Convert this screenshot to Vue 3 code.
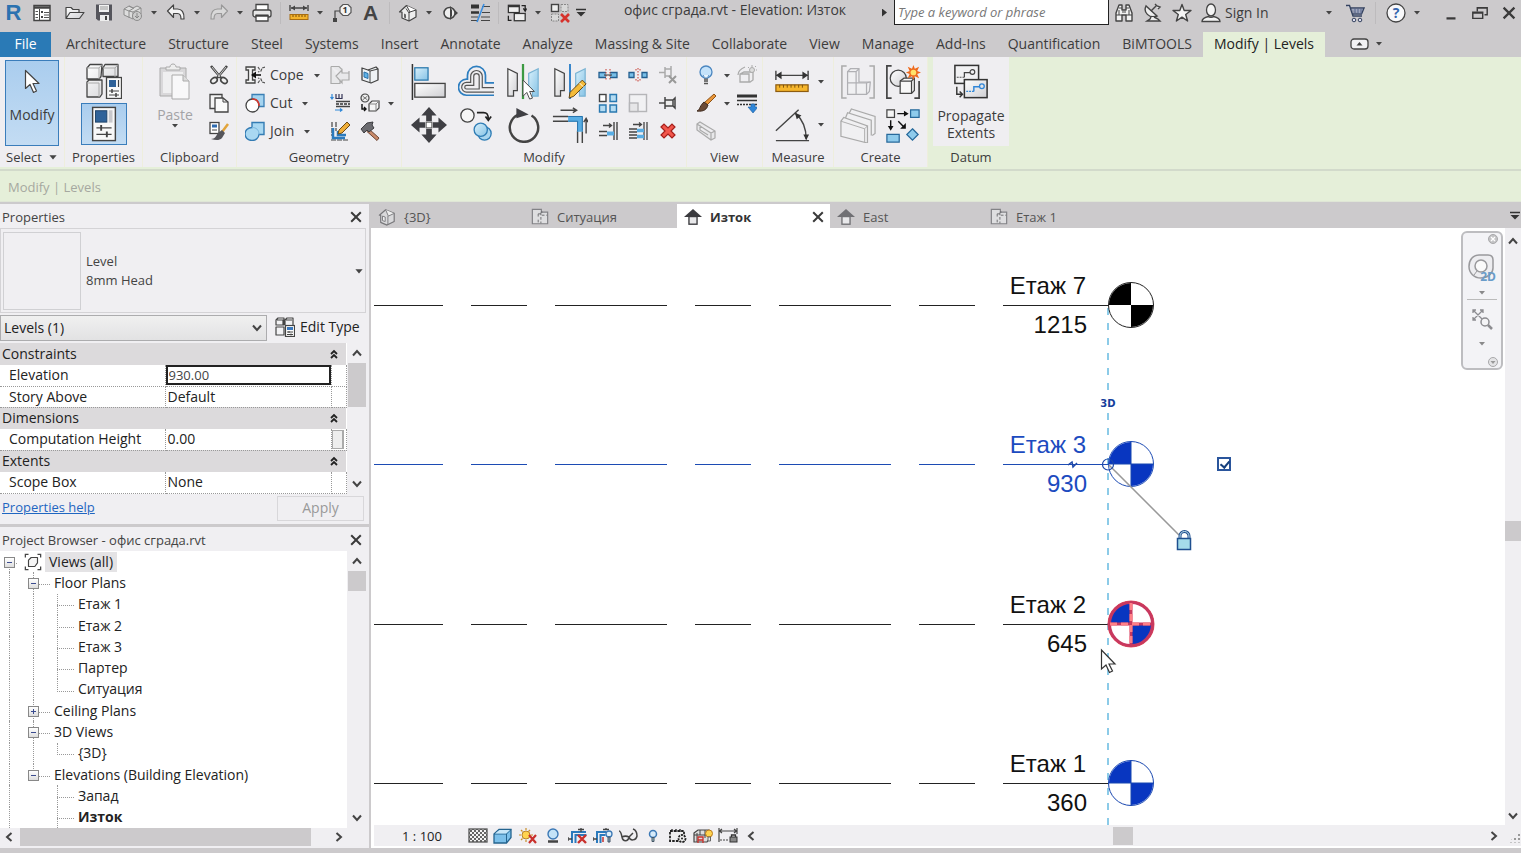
<script setup>
import { ref } from 'vue'

const quickTools = [
  { icon: 'palette', label: 'Home', wide: true },
  { icon: 'open', label: 'Open' },
  { icon: 'save', label: 'Save' },
  { icon: 'sync', label: 'Synchronize', caret: true },
  { icon: 'undo', label: 'Undo', caret: true },
  { icon: 'redo', label: 'Redo', caret: true },
  { icon: 'print', label: 'Print', sep: true },
  { icon: 'dim-small', label: 'Measure', caret: true },
  { icon: 'tag', label: 'Tag by category', badge: '1' },
  { text: 'A', label: 'Text', sep: true },
  { icon: 'house', label: 'Default 3D view', caret: true },
  { icon: 'section', label: 'Section' },
  { icon: 'thin', label: 'Thin lines', sep: true },
  { icon: 'switch', label: 'Switch windows', caret: true },
  { icon: 'close-win', label: 'Close inactive views' },
]

const infoTools = [
  { icon: 'binoculars', label: 'Search' },
  { icon: 'dish', label: 'Communication center' },
  { icon: 'star', label: 'Favorites' },
]

const windowTools = [
  { icon: 'min', label: 'Minimize' },
  { icon: 'restore', label: 'Restore' },
  { icon: 'close', label: 'Close' },
]

const ribbonTabs = [
  'Architecture', 'Structure', 'Steel', 'Systems', 'Insert', 'Annotate', 'Analyze',
  'Massing & Site', 'Collaborate', 'View', 'Manage', 'Add-Ins', 'Quantification', 'BiMTOOLS',
]

const clipboardTools = ['cutclip', 'copyclip', 'matchtype']
const geometryTools = [
  { icon: 'cope', label: 'Cope' },
  { icon: 'cutgeo', label: 'Cut' },
  { icon: 'join', label: 'Join' },
]
const geometrySmall = ['coping', 'face', 'wallopen', 'paintgeo', 'beam', 'hammer']
const modifyBig = ['align', 'offset', 'mirrorpick', 'mirrordraw', 'move', 'copy', 'rotate', 'trim']
const modifySmall = ['split', 'splitgap', 'unpin', 'array', 'scale', 'pin', 'trimone', 'trimmulti', 'delete']
const createBig = ['group', 'creategroup', 'assembly', 'similar']

const viewTabs = [
  { icon: 'v3d', name: '{3D}' },
  { icon: 'vplan', name: 'Ситуация' },
  { icon: 'velev', name: 'Изток', active: true },
  { icon: 'velev', name: 'East' },
  { icon: 'vplan', name: 'Етаж 1' },
]

// Guides per row: l = line, n = blank, t = tee, e = corner, m = minus box, p = plus box
const tree = [
  { guides: 'm', name: 'Views (all)', root: true },
  { guides: 'lm', name: 'Floor Plans' },
  { guides: 'llt', name: 'Етаж 1' },
  { guides: 'llt', name: 'Етаж 2' },
  { guides: 'llt', name: 'Етаж 3' },
  { guides: 'llt', name: 'Партер' },
  { guides: 'lle', name: 'Ситуация' },
  { guides: 'lp', name: 'Ceiling Plans' },
  { guides: 'lm', name: '3D Views' },
  { guides: 'lle', name: '{3D}' },
  { guides: 'lm', name: 'Elevations (Building Elevation)', last: true },
  { guides: 'lnt', name: 'Запад' },
  { guides: 'lnt', name: 'Изток', bold: true },
]

const levels = [
  { name: 'Етаж 7', value: '1215', y: 77, tone: 'black' },
  { name: 'Етаж 3', value: '930', y: 236, tone: 'selected' },
  { name: 'Етаж 2', value: '645', y: 396, tone: 'hover' },
  { name: 'Етаж 1', value: '360', y: 555, tone: 'blue' },
]

const viewControls = ['detail', 'style', 'sun', 'shadow', 'crop', 'cropshow', 'glasses', 'bulb-mini', 'template', 'analytical', 'constraints']

const elevation = ref('930.00')
const filter = ref('Levels (1)')
const bubble = ref(true)
const keyword = ref('')
</script>

<template>
  <div class="app">
    <svg class="defs" aria-hidden="true">
      <defs>
        <linearGradient id="gGrey" x1="0" y1="0" x2="1" y2="1"><stop offset="0" stop-color="#fff" /><stop offset="1" stop-color="#cfcfd3" /></linearGradient>
        <linearGradient id="gBlue" x1="0" y1="0" x2="1" y2="1"><stop offset="0" stop-color="#d9f0fb" /><stop offset="1" stop-color="#86c3e6" /></linearGradient>
        <pattern id="pDots" width="4" height="4" patternUnits="userSpaceOnUse"><rect width="4" height="4" fill="#f4f4f4" /><path d="M0 0h2v2h2v2h-2v-2h-2z" fill="#666" /></pattern>
      </defs>

      <symbol id="caret" viewBox="0 0 8 5"><path d="M1 1h6L4 4.500z" fill="#444" /></symbol>
      <symbol id="chev-down" viewBox="0 0 12 12"><path d="M2 3.500l4 4.500 4-4.500" fill="none" stroke="#444" stroke-width="2" /></symbol>
      <symbol id="chev-up" viewBox="0 0 12 12"><path d="M2 8.500l4-4.500 4 4.500" fill="none" stroke="#444" stroke-width="2" /></symbol>
      <symbol id="chev-left" viewBox="0 0 12 12"><path d="M8.500 2L4 6l4.500 4" fill="none" stroke="#444" stroke-width="2" /></symbol>
      <symbol id="chev-right" viewBox="0 0 12 12"><path d="M3.500 2L8 6l-4.500 4" fill="none" stroke="#444" stroke-width="2" /></symbol>
      <symbol id="chev-double" viewBox="0 0 10 12"><path d="M2 6l3-3 3 3M2 10l3-3 3 3" fill="none" stroke="#222" stroke-width="1.800" /></symbol>
      <symbol id="close" viewBox="0 0 20 20"><path d="M4 4l12 12M16 4L4 16" stroke="#3a3a3a" stroke-width="2.500" /></symbol>
      <symbol id="min" viewBox="0 0 20 20"><path d="M5 16h10" stroke="#3a3a3a" stroke-width="2.500" /></symbol>
      <symbol id="restore" viewBox="0 0 20 20"><path d="M7 8V4h11v8h-3M2 9h11v7H2z M2 10h11M7 4.500h11" fill="none" stroke="#3a3a3a" stroke-width="1.600" /></symbol>
      <symbol id="menu-down" viewBox="0 0 12 10"><path d="M1 1.500h10" stroke="#333" stroke-width="1.500" /><path d="M1.500 4h9L6 8.500z" fill="#333" /></symbol>

      <symbol id="palette" viewBox="0 0 20 20"><rect x="2" y="2.500" width="16" height="15" fill="#fff" stroke="#444" stroke-width="1.500" /><path d="M2 4.500h16" stroke="#444" stroke-width="2.500" /><path d="M7.500 6v11" stroke="#444" /><path d="M3.500 8.500h2.500M3.500 11.500h2.500M3.500 14.500h2.500M12 14.500h5M12 9.500h5M12 12h5" stroke="#555" stroke-width="1.200" /><rect x="9" y="8" width="2" height="2" fill="#444" /><rect x="9" y="13" width="2" height="2" fill="#444" /></symbol>
      <symbol id="open" viewBox="0 0 20 20"><path d="M1 15.500V4.500h5l2 2h6v3M1 15.500L5 9.500h14l-4.500 6z" fill="url(#gGrey)" stroke="#444" stroke-width="1.200" stroke-linejoin="round" /></symbol>
      <symbol id="save" viewBox="0 0 20 20"><path d="M2 1.500h16v16H4l-2-2z" fill="#55555c" /><rect x="5" y="2" width="10" height="7" fill="#f2f2f2" /><path d="M6 4h8M6 6h8" stroke="#999" /><rect x="6" y="12" width="9" height="6" fill="#eee" /><rect x="11" y="13" width="2" height="4" fill="#444" /></symbol>
      <symbol id="sync" viewBox="0 0 20 20"><path d="M1 6l5-3 4 2 4-2 4 2v6l-8 5-9-4z M1 6l5 2v7M6 8l5-3M10 16V9l8-4M10 9L6 8M6 3l4 2" fill="#ddd" stroke="#8c8c8c" /><circle cx="14" cy="13" r="4.500" fill="#ccc" stroke="#8c8c8c" /><path d="M14 10v5M12 13l2 2 2-2" fill="none" stroke="#888" /></symbol>
      <symbol id="undo" viewBox="0 0 20 20"><path d="M1.500 8l6-6v4h4c4 0 7 3 6.500 10h-3c0-4-1-5.500-3.500-5.500h-4v4z" fill="#f4f4f4" stroke="#444" stroke-width="1.200" stroke-linejoin="round" /></symbol>
      <symbol id="redo" viewBox="0 0 20 20"><path d="M18.500 8l-6-6v4h-4C4.500 6 1.500 9 2 16h3c0-4 1-5.500 3.500-5.500h4v4z" fill="#d9d9d9" stroke="#999" stroke-width="1.200" stroke-linejoin="round" /></symbol>
      <symbol id="print" viewBox="0 0 20 20"><path d="M4 7V1.500h12V7" fill="#fff" stroke="#444" stroke-width="1.300" /><rect x="1" y="7" width="18" height="7" rx="2" fill="#e8e8e8" stroke="#444" stroke-width="1.300" /><path d="M3.500 12.500h13" stroke="#333" stroke-width="2" /><path d="M4 13h12v5H4z" fill="#fff" stroke="#444" stroke-width="1.300" /></symbol>
      <symbol id="dim-small" viewBox="0 0 20 20"><path d="M2 5h16M1 2v6M19 2v6" fill="none" stroke="#444" stroke-width="1.400" /><path d="M2 5l4-2.500v5zM18 5l-4-2.500v5z" fill="#444" /><rect x="1" y="11.500" width="18" height="5" fill="#f3b32c" stroke="#a86d11" /><path d="M4 12v2M7 12v2M10 12v2M13 12v2M16 12v2" stroke="#7a4f0b" /></symbol>
      <symbol id="tag" viewBox="0 0 20 20"><path d="M8 4.500l3-3h5l3 3v5l-3 3h-5l-3-3z" fill="#f4f4f4" stroke="#555" stroke-width="1.200" /><path d="M8 8H3v8" fill="none" stroke="#444" stroke-width="1.200" /><path d="M1 15h4v4H1z" fill="#444" /></symbol>
      <symbol id="house" viewBox="0 0 20 20"><path d="M1.500 9l7-6.500L18 7v7l-7 4-7-3V9z" fill="#eee" stroke="#444" stroke-width="1.200" stroke-linejoin="round" /><path d="M8.500 2.500L12 9l6-2M11 10v8M12 9l-1 1L8 5.500" fill="#fff" stroke="#444" /><path d="M6 10.500l2 1v4l-2-1z" fill="#666" /></symbol>
      <symbol id="section" viewBox="0 0 20 20"><path d="M9 3l8 7-8 7z" fill="#444" /><circle cx="8.500" cy="10" r="5.500" fill="#eee" stroke="#444" stroke-width="1.500" /><path d="M9 4v12l2-3V7z" fill="#444" /></symbol>
      <symbol id="thin" viewBox="0 0 20 20"><path d="M1 3.500h8" stroke="#333" stroke-width="4" /><path d="M1 9.500h8" stroke="#333" stroke-width="2.500" /><path d="M1 14h7M1 17.500h7M12 3.500h8M12 9.500h8M11 14h9M11 17.500h9" stroke="#444" stroke-width="1.200" /><path d="M14 1L7 19" stroke="#3b8ee0" stroke-width="1.600" /></symbol>
      <symbol id="switch" viewBox="0 0 22 20"><rect x="1.500" y="1.500" width="12" height="8" fill="#eee" stroke="#333" stroke-width="1.400" /><path d="M1.500 2.500h12M8 11.500h12" stroke="#333" stroke-width="2.200" /><rect x="8" y="10.500" width="12" height="8" fill="#eee" stroke="#333" stroke-width="1.400" /><path d="M16 2h4v5M18 5l2 3 1.500-3M5 18H1.500v-5" fill="none" stroke="#222" stroke-width="1.400" /></symbol>
      <symbol id="close-win" viewBox="0 0 20 20"><rect x="1.500" y="1.500" width="7" height="7" fill="#eee" stroke="#444" stroke-width="1.400" /><path d="M11 1.500h7v7h-7zM1.500 11h7v7h-7z" fill="#d8d8d8" stroke="#888" stroke-dasharray="2 1" /><path d="M11 11l8 8M19 11l-8 8" stroke="#d6322c" stroke-width="2.600" /></symbol>
      <symbol id="binoculars" viewBox="0 0 20 20"><path d="M5 2h3v5h4V2h3l3 8v8h-6v-6H8v6H2v-8z" fill="#f2f2f2" stroke="#444" stroke-width="1.400" stroke-linejoin="round" /><path d="M2 12h6M12 12h6M5 5h3M12 5h3M8 9h4M5 12V7M15 12V7" stroke="#444" /></symbol>
      <symbol id="dish" viewBox="0 0 20 20"><path d="M3 3c-3 6 3 13 11 10z" fill="#eee" stroke="#444" stroke-width="1.400" /><path d="M8 8l5-5M12 1l2 2 3 1-2 2M8 14l-1 2-3 2h13l-2-2-4-2" fill="#eee" stroke="#444" stroke-width="1.400" /></symbol>
      <symbol id="star" viewBox="0 0 20 20"><path d="M10 1.500l2.200 6H19l-5.300 4L15.600 18 10 14.200 4.400 18l1.900-6.500L1 7.500h6.800z" fill="#f4f4f4" stroke="#444" stroke-width="1.400" stroke-linejoin="round" /></symbol>
      <symbol id="person" viewBox="0 0 20 20"><ellipse cx="10" cy="7" rx="4.500" ry="6" fill="#f4f4f4" stroke="#444" stroke-width="1.300" /><path d="M1 18.500c0-3 2-4 6.500-5 1 1.200 4 1.200 5 0 4.500 1 6.500 2 6.500 5z" fill="#f4f4f4" stroke="#444" stroke-width="1.300" /></symbol>
      <symbol id="cart" viewBox="0 0 20 20"><path d="M1 2.500h3.500L8 13h9M5.500 5H19l-2.500 6H7.500" fill="#e6e8f2" stroke="#34425f" stroke-width="1.400" /><path d="M6 7h12M7 9h10M10 5v6M13 5v6M16 5v6" fill="none" stroke="#56658a" /><circle cx="9" cy="17" r="1.800" fill="#dde" stroke="#34425f" /><circle cx="15" cy="17" r="1.800" fill="#dde" stroke="#34425f" /></symbol>
      <symbol id="help" viewBox="0 0 20 20"><circle cx="10" cy="10" r="9" fill="#f8f8fa" stroke="#444" stroke-width="1.300" /></symbol>

      <symbol id="cursor" viewBox="0 0 16 26"><path d="M1.500 1.500v18l4.500-4 3.500 8 3-1.500-3.500-7.500h6z" fill="#fff" stroke="#444" stroke-width="1.200" stroke-linejoin="round" /></symbol>
      <symbol id="typeprops" viewBox="0 0 36 36"><path d="M1 5l3-3.500h12l-1 12-2 2.500H1zM17 5l2-3.500h13v12H17zM1 19l2-2h13v14l-2 3H1z" fill="url(#gGrey)" stroke="#444" stroke-width="1.300" stroke-linejoin="round" /><path d="M1 5h12v11M13 5l3-3.500M17 5h12v9M29 5l3-3.500M1 20h12v14" fill="none" stroke="#aaa" /><rect x="20.500" y="14.500" width="15" height="21" fill="#fafafa" stroke="#444" stroke-width="1.300" /><rect x="23" y="17" width="7" height="7" fill="#2f6299" /><path d="M32.500 17v7M23 28h10M23 32h10" stroke="#444" stroke-width="1.200" /><path d="M26 26v4M30 30v4" stroke="#444" stroke-width="1.500" /></symbol>
      <symbol id="edittype" viewBox="0 0 20 20"><path d="M1 3l2-2h6v7H1zM10 8V3l2-2h6v7M1 10h8v8H1zM9 3H2M17 3h-6M8 3v5" fill="#f2f2f4" stroke="#444" stroke-width="1.200" stroke-linejoin="round" /><rect x="10.500" y="8.500" width="9" height="11" fill="#fff" stroke="#444" stroke-width="1.200" /><rect x="12" y="10" width="6" height="3" fill="#3a78bd" /><path d="M12 15h6M12 17.500h6M14 14v2M16 16.500v2" stroke="#444" /></symbol>
      <symbol id="props" viewBox="0 0 28 38"><rect x="2" y="1.500" width="24" height="35" fill="#f8f8f8" stroke="#444" stroke-width="1.500" /><rect x="5" y="5" width="12" height="12" fill="#2f6299" stroke="#1d4268" /><rect x="19" y="4.500" width="4" height="13" fill="#c8c8cc" /><path d="M6 23h16M6 30h16" stroke="#444" stroke-width="1.400" /><path d="M11 20v6M17 27v6" stroke="#444" stroke-width="2" /></symbol>
      <symbol id="paste" viewBox="0 0 32 38"><path d="M1 5h26v28H1z" fill="#d9d8da" stroke="#aaa" /><rect x="4" y="9" width="20" height="21" fill="#efeff0" /><path d="M7 7V4h4c0-4 6-4 6 0h4v3z" fill="#eee" stroke="#aaa" /><path d="M13 12h11l6 6v18H13z" fill="#f8f8f9" stroke="#aaa" /><path d="M24 12v6h6" fill="#ddd" stroke="#aaa" /></symbol>
      <symbol id="cutclip" viewBox="0 0 20 20"><path d="M2 1l10 12M18 1L8 13" stroke="#444" stroke-width="2.600" /><path d="M3 2l8 10M17 2L9 12" stroke="#eee" stroke-width=".8" /><ellipse cx="5" cy="15.500" rx="3.500" ry="2.500" fill="#eee" stroke="#444" stroke-width="1.600" transform="rotate(-35 5 15.500)" /><ellipse cx="15" cy="15.500" rx="3.500" ry="2.500" fill="#eee" stroke="#444" stroke-width="1.600" transform="rotate(35 15 15.500)" /></symbol>
      <symbol id="copyclip" viewBox="0 0 20 20"><path d="M1 1.500h12v14H1z" fill="#f4f4f4" stroke="#444" stroke-width="1.300" /><path d="M6 5h8l5 4v10H6z" fill="#fafafa" stroke="#444" stroke-width="1.300" /><path d="M14 5v4h5" fill="none" stroke="#444" /></symbol>
      <symbol id="matchtype" viewBox="0 0 20 20"><rect x="1" y="1.500" width="9" height="11" fill="#fff" stroke="#444" stroke-width="1.300" /><rect x="3" y="3.500" width="5" height="3" fill="#2f6bb0" /><path d="M3 9h5" stroke="#444" /><path d="M19 3l-6 8" stroke="#e2a43b" stroke-width="2.500" /><path d="M13 9l3 3-3 5c-3 3-7 2-11 1 4 0 5-3 7-6z" fill="#55555a" /></symbol>
      <symbol id="cope" viewBox="0 0 20 20"><path d="M1 2h9v3H7.500v10H10v3H1v-3h2.500V5H1z" fill="#f4f4f4" stroke="#444" stroke-width="1.300" /><path d="M20 2l-3 1-1 3-3 1M20 18l-3-1-1-3-3-1M13 2l2 3M13 18l2-3" fill="none" stroke="#555" stroke-width="1.200" stroke-dasharray="3 1" /><path d="M7 10h9" stroke="#111" stroke-width="1.600" /><path d="M6 10l5-3.500v7z" fill="#111" /></symbol>
      <symbol id="cutgeo" viewBox="0 0 20 20"><path d="M7 1.500h12v12H7z" fill="#a5d4f0" stroke="#3a7fb5" stroke-width="1.300" /><circle cx="7.500" cy="12.500" r="6.500" fill="#fff" stroke="#444" stroke-width="1.300" /><path d="M7 6c5 0 7 3 7 7" fill="none" stroke="#d43a30" stroke-width="1.600" /></symbol>
      <symbol id="join" viewBox="0 0 20 20"><path d="M7 1.500h12v12h-5a7 6.500 0 1 1-7-7z" fill="#a9d8f2" stroke="#347cb4" stroke-width="1.400" /><path d="M7 6.500c4 0 7 2 7 7" fill="none" stroke="#7ab6dc" /></symbol>
      <symbol id="coping" viewBox="0 0 20 20"><path d="M1 1.500h8l3 3v4M1 1.500v17h9v-4M19 6v9h-7v3l-6-7 6-6v3h7z" fill="#e8e8ea" stroke="#aaa" stroke-width="1.200" /></symbol>
      <symbol id="face" viewBox="0 0 20 20"><path d="M2 3l6 2 8-3 2 2v11l-7 3-9-3z" fill="#eef2f5" stroke="#444" stroke-width="1.300" stroke-linejoin="round" /><path d="M8 5l2 1 8-2M10 6v12" fill="none" stroke="#444" /><path d="M4 7l4 1.500v5L4 12z" fill="#5fb2e6" stroke="#2a70a8" /></symbol>
      <symbol id="wallopen" viewBox="0 0 20 20"><path d="M2 1v5M.5 4L2 6l1.500-2M5 17h6M10 15.500l2 1.500-2 1.500" fill="none" stroke="#2f88d8" stroke-width="1.200" /><path d="M6 1v4.500h6V1M9 1v4" fill="none" stroke="#335" stroke-width="1.200" /><path d="M6 8.500h14M6 13.500h14" stroke="#444" stroke-width="1.500" /><path d="M6 11h14" stroke="#333" stroke-width="1.500" stroke-dasharray="3 1" /></symbol>
      <symbol id="paintgeo" viewBox="0 0 20 20"><circle cx="5" cy="5" r="4" fill="#eee" stroke="#444" stroke-width="1.200" /><path d="M2.500 3l5 4M7.500 3l-5 4" stroke="#777" /><path d="M9 11l3-3h7v7l-3 3H9z" fill="#f5f5f5" stroke="#444" stroke-width="1.200" /><path d="M9 11h7v7M16 11l3-3" fill="none" stroke="#888" /><path d="M2 11v5h4M4 14l2 2-2 2" fill="none" stroke="#111" stroke-width="1.400" /></symbol>
      <symbol id="beam" viewBox="0 0 20 20"><path d="M2 1v14M6 1v9M1 19h18" stroke="#444" stroke-width="1.200" stroke-dasharray="5 1" /><path d="M3 7v10h12M8 10v4h8" fill="none" stroke="#2b7abd" stroke-width="2.500" /><path d="M17 1l3 3-8 8-4 1 1-4z" fill="#f0ae38" stroke="#6b4a14" /></symbol>
      <symbol id="hammer" viewBox="0 0 20 20"><path d="M9 8l10 9-2 2.500L7 10.500z" fill="#c98a6a" stroke="#6d4634" /><path d="M1 8l6-6 6-1-1 3 2 3-5 4-2-2-3 3z" fill="#6b6b70" stroke="#3c3c40" stroke-linejoin="round" /></symbol>

      <symbol id="align" viewBox="0 0 38 38"><path d="M1.500 0v38" stroke="#333" stroke-width="1.600" /><rect x="4" y="4" width="14" height="13" fill="url(#gBlue)" stroke="#2676ab" stroke-width="1.300" /><rect x="4" y="20.500" width="32" height="14.500" fill="url(#gGrey)" stroke="#444" stroke-width="1.400" /></symbol>
      <symbol id="offset" viewBox="0 0 38 38"><path d="M38 26.500H24V13a4.500 4.500 0 0 0-9 0v8H9a3.500 3.500 0 0 0 0 7h29" fill="none" stroke="#555" stroke-width="4.500" /><path d="M38 26.500H24V13a4.500 4.500 0 0 0-9 0v8H9a3.500 3.500 0 0 0 0 7h29" fill="none" stroke="#eeeef0" stroke-width="2" /><path d="M38 20h-9v-8a9.500 9.500 0 0 0-19 0v4H9a8.500 8.500 0 0 0 0 17h29" fill="none" stroke="#2d7ec0" stroke-width="1.800" /></symbol>
      <symbol id="mirrorpick" viewBox="0 0 38 38"><path d="M3 5l10 5v18H9v6H3z" fill="url(#gGrey)" stroke="#444" stroke-width="1.300" /><path d="M35 5l-10 5v18h4v6h6z" fill="url(#gBlue)" stroke="#7bb4d4" stroke-width="1.300" /><path d="M19 0v37" stroke="#3c9a42" stroke-width="2.400" /><path d="M19 17v17l4-4 3 7 3-1-3-7h5z" fill="#fff" stroke="#444" /></symbol>
      <symbol id="mirrordraw" viewBox="0 0 38 38"><path d="M3 5l10 5v18H9v6H3z" fill="url(#gGrey)" stroke="#444" stroke-width="1.300" /><path d="M35 5l-10 5v18h4v6h6z" fill="url(#gBlue)" stroke="#7bb4d4" stroke-width="1.300" /><path d="M19 0v37" stroke="#2f80c8" stroke-width="2" /><path d="M32 17l4 4-13 13-5 2 1-6z" fill="#f4bb3a" stroke="#5e4212" stroke-linejoin="round" /><path d="M29 20l4 4" stroke="#fff" /></symbol>
      <symbol id="move" viewBox="0 0 38 38"><path d="M19 0l8 9h-5v6h-6V9h-5zM19 38l8-9h-5v-6h-6v6h-5zM0 19l9-8v5h6v6H9v5zM38 19l-9-8v5h-6v6h6v5z" fill="#3f3f44" /><rect x="16" y="16" width="6" height="6" fill="#fff" stroke="#555" /></symbol>
      <symbol id="copy" viewBox="0 0 38 38"><circle cx="10" cy="9" r="7" fill="#f6f6f6" stroke="#444" stroke-width="1.400" /><circle cx="28" cy="28" r="7" fill="#a8d5ef" stroke="#2f7db5" stroke-width="1.400" /><circle cx="24" cy="24" r="7" fill="url(#gBlue)" stroke="#2f7db5" stroke-width="1.400" /><path d="M20 6h7c4 0 5 2 5 7M29 10l3 4 3-4" fill="none" stroke="#222" stroke-width="1.800" /></symbol>
      <symbol id="rotate" viewBox="0 0 38 38"><path d="M14 8a15 15 0 1 0 14 1" fill="none" stroke="#444" stroke-width="2.600" /><path d="M12 1v11l13-4z" fill="#3f3f44" /></symbol>
      <symbol id="trim" viewBox="0 0 38 38"><path d="M1 10h16M1 15h16M27 25v13M32 25v13" stroke="#444" stroke-width="1.500" /><path d="M17 12.500h12.500V26" fill="none" stroke="#58ade4" stroke-width="6" /><path d="M17 10h15v15M17 15h10v11" fill="none" stroke="#236fa8" /><path d="M9 3.500h16M22 1l4 2.500L22 6M36 28V13M33.500 16l2.500-4 2 4" fill="none" stroke="#444" stroke-width="1.500" /></symbol>
      <symbol id="split" viewBox="0 0 20 20"><path d="M1 7.500h18v5H1z" fill="#79bfe8" stroke="#245f90" stroke-width="1.300" /><rect x="8" y="6" width="4" height="8" fill="#eee" /><path d="M8 4v12M12 4v12" stroke="#c6382f" stroke-dasharray="1.500 1.500" /><path d="M6 10h8" stroke="#333" /></symbol>
      <symbol id="splitgap" viewBox="0 0 20 20"><path d="M1 7.500h5v5H1zM14 7.500h5v5h-5z" fill="#79bfe8" stroke="#245f90" stroke-width="1.300" /><path d="M10 3v14M8 4v2M12 4v2M8 14v2M12 14v2" stroke="#c6382f" stroke-dasharray="1.500 1.500" /></symbol>
      <symbol id="unpin" viewBox="0 0 20 20"><path d="M1 7.500h6M7 2v11M7 4h6v7H7M13 1v9" fill="none" stroke="#aaa" stroke-width="1.500" /><path d="M11 11l7 7M18 11l-7 7" stroke="#999" stroke-width="2" /></symbol>
      <symbol id="array" viewBox="0 0 20 20"><rect x="1.500" y="1.500" width="6.500" height="7" fill="#fff" stroke="#444" stroke-width="1.400" /><path d="M12 1.500h6.500v7H12zM1.500 12H8v7H1.500zM12 12h6.500v7H12z" fill="#b5dcf2" stroke="#2878b0" stroke-width="1.400" /></symbol>
      <symbol id="scale" viewBox="0 0 20 20"><rect x="1.500" y="1.500" width="17" height="17" fill="#f1f1f3" stroke="#b5b5b8" stroke-width="1.400" /><rect x="1.500" y="10" width="8.500" height="8.500" fill="#e6e6e8" stroke="#b5b5b8" stroke-width="1.400" /></symbol>
      <symbol id="pin" viewBox="0 0 20 20"><path d="M1 10h6" stroke="#444" stroke-width="1.400" /><path d="M7 4v12M7 7h8v6H7M15 7l2-2v10l-2-2" fill="#eee" stroke="#444" stroke-width="1.500" /></symbol>
      <symbol id="trimone" viewBox="0 0 20 20"><path d="M5 4.500h8M11 2.500l2.500 2-2.500 2M1 10.500h8M1 14.500h8M16 1v18M19 1v18" fill="none" stroke="#444" stroke-width="1.400" /><path d="M9 12.500h7" stroke="#58ade4" stroke-width="4" /></symbol>
      <symbol id="trimmulti" viewBox="0 0 20 20"><path d="M5 3.500h8M11 1.500l2.500 2-2.500 2M1 8h8M1 11h8M1 14h8M1 17h8M16 1v18M19 1v18" fill="none" stroke="#444" stroke-width="1.300" /><path d="M9 9.500h7M9 15.500h7" stroke="#58ade4" stroke-width="3.500" /></symbol>
      <symbol id="delete" viewBox="0 0 20 20"><path d="M3 6l3-3 4 4 4-4 3 3-4 4 4 4-3 3-4-4-4 4-3-3 4-4z" fill="#f2564c" stroke="#a51f1b" stroke-width="1.200" /></symbol>

      <symbol id="bulb" viewBox="0 0 20 20"><circle cx="10" cy="7" r="6" fill="#c4e2fa" stroke="#4a86c0" stroke-width="1.300" /><path d="M8 13h4v4H8z" fill="#777" /><path d="M7 10c1 1 1 2 1 3h4c0-1 0-2 1-3" fill="#e8f4fd" stroke="#4a86c0" /><path d="M8 18.500h4" stroke="#555" stroke-width="1.500" /></symbol>
      <symbol id="hidebox" viewBox="0 0 20 20"><path d="M3 9l4-2h9v8l-3 2H3zM3 9h9v8M1 10c0-3 2-6 7-8" fill="none" stroke="#aaa" stroke-width="1.300" /><circle cx="15" cy="5" r="2.500" fill="#ddd" stroke="#aaa" /><path d="M15 0v2M19 5h1M11 2l1 1M19 1l-1 1" stroke="#aaa" /></symbol>
      <symbol id="brush" viewBox="0 0 20 20"><path d="M18 1l2 2-9 9-3-2z" fill="#e9963a" stroke="#8e5214" /><path d="M8 9l4 3c-1 4-4 7-11 6 3-1 3-6 7-9z" fill="#6b4a36" stroke="#3f2b1f" /></symbol>
      <symbol id="linework" viewBox="0 0 20 20"><path d="M0 3h20" stroke="#333" stroke-width="3" /><path d="M0 7.500h20" stroke="#333" stroke-width="1.500" /><path d="M0 11.500h20" stroke="#333" stroke-dasharray="2 1" stroke-width="1.300" /><path d="M14 11h4v3h3l-5 6-5-6h3z" fill="#2f86d8" stroke="#1d5c9c" stroke-width=".6" /></symbol>
      <symbol id="wire" viewBox="0 0 20 20"><path d="M1 3l3-2 15 9v7l-4 2L1 9zM1 3l14 9 4-2M15 12v7M4 4v5l8 5" fill="#e8e8ea" stroke="#aaa" stroke-width="1.200" /></symbol>
      <symbol id="dim" viewBox="0 0 38 38"><path d="M2 12h34M2 7v10M36 7v10" stroke="#444" stroke-width="1.500" /><path d="M2 12l6-4v8zM36 12l-6-4v8z" fill="#333" /><rect x="2" y="22" width="34" height="7" fill="#f6b62c" stroke="#8e5c10" stroke-width="1.300" /><path d="M6 22v3M10 22v3M14 22v3M18 22v3M22 22v3M26 22v3M30 22v3" stroke="#7a4f0b" /></symbol>
      <symbol id="angle" viewBox="0 0 38 38"><path d="M2 25L26 3M2 35.500h35" stroke="#444" stroke-width="1.500" /><path d="M23 7c8 7 11 17 11 27" fill="none" stroke="#444" stroke-width="1.500" /><path d="M22 6l7 3-5 4zM34 35l-3-6h6z" fill="#333" /></symbol>
      <symbol id="group" viewBox="0 0 38 38"><path d="M7 2H2v34h5M31 2h5v34h-5" fill="none" stroke="#aaa" stroke-width="1.600" /><path d="M8 8l3-3h9v14h12l-1 10-3 3H8z" fill="#f0f0f2" stroke="#b0b0b4" stroke-width="1.300" /><path d="M8 8h9v24M20 5l-3 3M8 20h20v12M28 20l4-1" fill="none" stroke="#b0b0b4" stroke-width="1.300" /></symbol>
      <symbol id="creategroup" viewBox="0 0 38 38"><path d="M7 2H2v34h5M31 36h5V18" fill="none" stroke="#444" stroke-width="1.800" /><circle cx="14" cy="15" r="8.500" fill="url(#gGrey)" stroke="#444" stroke-width="1.300" /><path d="M16 18l4-3h11v13l-3 3H16z" fill="#f8f8f8" stroke="#444" stroke-width="1.300" /><path d="M16 18h12v13M28 18l3-3" fill="none" stroke="#444" stroke-width="1.300" /><path d="M30 1l1.500 4L36 3l-2 4.500 4 1.500-4 1.500 2 4.500-4.500-2-1.500 4-1.500-4-4.500 2 2-4.500-4-1.500 4-1.500-2-4.500 4.500 2z" fill="#ee6a1c" /><circle cx="30" cy="9" r="3" fill="#ffe36b" /></symbol>
      <symbol id="assembly" viewBox="0 0 38 38"><path d="M10 6l2-4 25 8v18l-3 2M6 11l2-5 25 8v16M1 15l3-4 25 9v18L1 31z" fill="#f0f0f2" stroke="#aaa" stroke-width="1.300" /><path d="M1 15l25 8 3-3M26 23v14" fill="none" stroke="#aaa" /></symbol>
      <symbol id="similar" viewBox="0 0 38 38"><rect x="2" y="3" width="8" height="8" fill="#f6f6f6" stroke="#444" stroke-width="1.300" /><path d="M27 3h9v8h-9zM2 29h13v8H2z" fill="#8ecbec" stroke="#27699b" stroke-width="1.300" /><path d="M29 23l6 6-6 6-6-6z" fill="#8ecbec" stroke="#27699b" stroke-width="1.300" /><path d="M13 7h8M6 14v8M14 15l6 6" stroke="#111" stroke-width="1.500" /><path d="M20 4l5 3-5 3zM3 20h6l-3 5zM22 17v6h-6z" fill="#111" /></symbol>
      <symbol id="propagate" viewBox="0 0 38 38"><rect x="2" y="1.500" width="25" height="19" fill="#f1f1f3" stroke="#333" stroke-width="1.600" /><path d="M4 14h8" stroke="#444" stroke-dasharray="2 1" /><path d="M12 14V9h6" fill="none" stroke="#444" stroke-width="1.300" /><circle cx="20.500" cy="8.500" r="2.500" fill="none" stroke="#444" stroke-width="1.200" /><rect x="12" y="16.500" width="24" height="19" fill="url(#gGrey)" stroke="#333" stroke-width="1.600" /><path d="M14 29h8" stroke="#2f86d8" stroke-dasharray="2 1" stroke-width="1.300" /><path d="M22 29v-5h6" fill="none" stroke="#2f86d8" stroke-width="1.500" /><circle cx="30.500" cy="23.500" r="2.500" fill="none" stroke="#2f86d8" stroke-width="1.400" /><path d="M4 24v8h5M7 29l3 3-3 3" fill="none" stroke="#333" stroke-width="1.500" /></symbol>

      <symbol id="v3d" viewBox="0 0 20 20"><path d="M1.500 8l7-6L18 6v9l-8 4-7-3V8z" fill="#d9d9db" stroke="#77777a" stroke-width="1.300" stroke-linejoin="round" /><path d="M8.500 2l3 7 6.500-3M11 9v9.500M5 9l3 1v5l-3-1z" fill="#eee" stroke="#77777a" /></symbol>
      <symbol id="vplan" viewBox="0 0 20 20"><path d="M1.500 1.500h10v3h7v13h-17z" fill="#dedee0" stroke="#828286" stroke-width="1.300" /><path d="M8 6.500h4v-3M8 6.500v4M8 13v4M12 8h6M11 5v12" fill="none" stroke="#66666a" stroke-dasharray="3 2" /></symbol>
      <symbol id="velev" viewBox="0 0 20 20"><path d="M10 1l10 9H0z" fill="currentColor" /><rect x="5.500" y="9.500" width="9" height="8.500" fill="#e8e8ea" stroke="currentColor" stroke-width="1.500" /></symbol>
      <symbol id="viewsall" viewBox="0 0 20 20"><path d="M5 1.500H1.500V5M15 1.500h3.500V5M5 18.500H1.500V15M15 18.500h3.500V15" fill="none" stroke="#444" stroke-width="1.400" /><path d="M5 8l3-3h7v6l-3 4H5z" fill="#f6f6f6" stroke="#444" stroke-width="1.300" stroke-linejoin="round" /></symbol>

      <symbol id="detail" viewBox="0 0 20 16"><rect x="1" y="1" width="18" height="13" fill="url(#pDots)" stroke="#555" stroke-width="1.300" /></symbol>
      <symbol id="style" viewBox="0 0 20 16"><path d="M1 6l5-4.500h12v8L13.500 15H1z" fill="#7cc0ea" stroke="#24648f" stroke-width="1.300" /><path d="M1 6h12.500v9M13.500 6L18 1.500" fill="none" stroke="#24648f" /><path d="M2 5.500L6.500 2h10.500l-4 3.500z" fill="#c7e6f8" /></symbol>
      <symbol id="sun" viewBox="0 0 20 16"><circle cx="8" cy="7" r="4" fill="#ffd34e" stroke="#b9842a" /><path d="M8 0v2M8 12v2M1 7h2M13 7h2M3 2l1.500 1.500M12 2l-1.500 1.500M3 12l1.500-1.500" stroke="#c98d28" stroke-width="1.200" /><path d="M11 7l7 8M18 7l-7 8" stroke="#c9302c" stroke-width="2.200" /></symbol>
      <symbol id="shadow" viewBox="0 0 20 16"><circle cx="10" cy="6" r="5" fill="#c3e2f7" stroke="#3b78b5" stroke-width="1.400" /><path d="M5 13.500h10" stroke="#444" stroke-width="2.500" /></symbol>
      <symbol id="crop" viewBox="0 0 20 16"><path d="M4 15V4h14M7.500 15V7h11" fill="none" stroke="#2b7abd" stroke-width="2" /><path d="M0 11h4M0 9v4M13 0v4M10 1.500h6" stroke="#444" stroke-width="1.300" /><path d="M10 7l8 8M18 7l-8 8" stroke="#c9302c" stroke-width="2.400" /></symbol>
      <symbol id="cropshow" viewBox="0 0 20 16"><path d="M4 15V4h9M7.500 15V7h5" fill="none" stroke="#2b7abd" stroke-width="2" /><path d="M0 11h4M0 9v4M13 0v2M10 1.500h6" stroke="#444" stroke-width="1.300" /><path d="M10 9v5" stroke="#c9302c" stroke-width="1.500" /><circle cx="16" cy="6" r="3" fill="#dff0fb" stroke="#3b78b5" stroke-width="1.300" /><path d="M15 9h2v5h-2z" fill="#8ab" stroke="#456" /></symbol>
      <symbol id="glasses" viewBox="0 0 20 16"><path d="M1 3c1 0 2 1 3 6M4 9c1 5 6 5 7 0M11 9c1 4 7 4 8-1 0-3-1-6-4-7M4 9c2-1 5-1 7 0M11 9l4-4" fill="none" stroke="#444" stroke-width="1.500" /></symbol>
      <symbol id="bulb-mini" viewBox="0 0 20 16"><circle cx="10" cy="6" r="3.500" fill="#d5eafa" stroke="#3b78b5" stroke-width="1.500" /><path d="M9 9.500h2v4H9z" fill="#9bb" stroke="#456" /></symbol>
      <symbol id="template" viewBox="0 0 20 16"><rect x="2" y="3" width="14" height="10" fill="#eee" stroke="#222" stroke-width="1.800" stroke-dasharray="2.500 1.200" /><path d="M4 1v3M8 1v3M12 1v3" stroke="#222" stroke-width="1.300" /><circle cx="14" cy="10.500" r="3.500" fill="#eee" stroke="#222" stroke-width="1.800" stroke-dasharray="2 1" /><circle cx="14" cy="10.500" r="1" fill="#222" /></symbol>
      <symbol id="analytical" viewBox="0 0 20 16"><path d="M1 5l4-3h11v9l-2 3H1z" fill="#ddd" stroke="#444" stroke-width="1.200" /><path d="M4 14V5M7 2v5M12 2v8M1 7h12" fill="none" stroke="#444" /><path d="M5 15V9h5v6M5 12h5" fill="none" stroke="#c9302c" stroke-width="1.300" /><circle cx="16" cy="5.500" r="3.500" fill="#ffd34e" stroke="#b97a1a" /><path d="M15 9h2.500v4H15z" fill="#e8e8e8" stroke="#666" /></symbol>
      <symbol id="constraints" viewBox="0 0 20 16"><path d="M1 0v14M19 0v6M1 3h18M4 1L1.500 3 4 5M16 1l2.500 2L16 5" fill="none" stroke="#444" stroke-width="1.200" /><path d="M2 12h9" stroke="#444" stroke-dasharray="2 1" /><rect x="12" y="9" width="7" height="5" fill="#888" stroke="#333" /><path d="M13.500 9V7h4v2" fill="none" stroke="#333" stroke-width="1.300" /></symbol>
      <symbol id="wheel" viewBox="0 0 30 32"><path d="M12 2h9c4 0 5 2 5 5v8c0 5-5 10-12 10C7 25 2 20 2 13.500S6 2 12 2z" fill="#ededf0" stroke="#99999c" stroke-width="1.500" /><circle cx="14" cy="13" r="6" fill="#fafafa" stroke="#99999c" stroke-width="1.500" /><path d="M10 18l-3 4" stroke="#99999c" /></symbol>
      <symbol id="zoomall" viewBox="0 0 22 22"><path d="M2 2l10 10M12 2L2 12M2 5V2h3M9 2h3v3M2 9v3h3" fill="none" stroke="#8c8c90" stroke-width="1.300" /><circle cx="14" cy="14" r="4" fill="#f4f4f6" stroke="#8c8c90" stroke-width="1.500" /><path d="M17 17l4 4" stroke="#8c8c90" stroke-width="2.500" /></symbol>
      <symbol id="nav-x" viewBox="0 0 12 12"><circle cx="6" cy="6" r="4.500" fill="#c4c4c6" stroke="#a8a8aa" /><path d="M4 4l4 4M8 4L4 8" stroke="#fff" stroke-width="1.200" /></symbol>
      <symbol id="nav-min" viewBox="0 0 12 12"><circle cx="6" cy="6" r="4.500" fill="#e4e4e6" stroke="#a8a8aa" /><path d="M3.500 5h5L6 8z" fill="#999" /></symbol>
      <symbol id="collapse" viewBox="0 0 20 12"><rect x="1" y="1" width="17" height="10" rx="3" fill="#f2f2f4" stroke="#444" stroke-width="1.300" /><path d="M6.500 7.500h6L9.500 4z" fill="#444" /></symbol>
    </svg>

    <header class="titlebar">
      <button class="logo" aria-label="Revit">R</button>
      <template v-for="t in quickTools" :key="t.label">
        <button class="tool" :class="{ wide: t.wide }" :aria-label="t.label">
          <svg v-if="t.icon" class="i20" viewBox="0 0 20 20"><use :href="'#' + t.icon" /><text v-if="t.badge" class="badge" x="13" y="10">{{ t.badge }}</text></svg>
          <span v-else class="glyph">{{ t.text }}</span>
        </button>
        <button v-if="t.caret" class="drop" :aria-label="t.label + ' options'"><svg class="caret"><use href="#caret" /></svg></button>
        <span v-if="t.sep" class="sep"></span>
      </template>
      <button class="drop" aria-label="Customize"><svg class="menu"><use href="#menu-down" /></svg></button>
      <h1 class="doc-title">офис сграда.rvt - Elevation: Изток</h1>
      <span class="expand"></span>
      <input v-model="keyword" class="search" type="text" aria-label="Search help" placeholder="Type a keyword or phrase" />
      <button v-for="t in infoTools" :key="t.icon" class="tool" :aria-label="t.label"><svg class="i20"><use :href="'#' + t.icon" /></svg></button>
      <button class="signin">
        <span class="tool"><svg class="i20"><use href="#person" /></svg></span>Sign In
        <svg class="caret push"><use href="#caret" /></svg>
      </button>
      <button class="tool" aria-label="App store"><svg class="i20"><use href="#cart" /></svg></button>
      <span class="sep roomy"></span>
      <button class="tool" aria-label="Help"><svg class="i20" viewBox="0 0 20 20"><use href="#help" /><text class="question" x="10" y="15">?</text></svg></button>
      <button class="drop" aria-label="Help options"><svg class="caret"><use href="#caret" /></svg></button>
      <span class="winbuttons">
        <button v-for="t in windowTools" :key="t.icon" class="tool" :aria-label="t.label"><svg class="i18"><use :href="'#' + t.icon" /></svg></button>
      </span>
    </header>

    <nav class="tabs">
      <button class="file">File</button>
      <button v-for="t in ribbonTabs" :key="t" class="tab">{{ t }}</button>
      <button class="tab active">Modify | Levels</button>
      <button class="collapse" aria-label="Minimize ribbon"><svg class="collapse-icon"><use href="#collapse" /></svg><svg class="caret"><use href="#caret" /></svg></button>
    </nav>

    <section class="ribbon">
      <div class="panel p-select">
        <div class="body">
          <button class="big on"><svg class="cursor"><use href="#cursor" /></svg><span>Modify</span></button>
        </div>
        <div class="label">Select <svg class="caret wide-caret"><use href="#caret" /></svg></div>
      </div>

      <div class="panel p-props">
        <div class="body stack">
          <button class="half" aria-label="Type properties"><svg class="i36"><use href="#typeprops" /></svg></button>
          <button class="half on" aria-label="Properties"><svg class="props-icon"><use href="#props" /></svg></button>
        </div>
        <div class="label">Properties</div>
      </div>

      <div class="panel p-clip">
        <div class="body">
          <button class="big dim"><svg class="paste-icon"><use href="#paste" /></svg><span>Paste</span><svg class="caret"><use href="#caret" /></svg></button>
          <div class="small one">
            <button v-for="i in clipboardTools" :key="i" :aria-label="i"><svg class="i20"><use :href="'#' + i" /></svg></button>
          </div>
        </div>
        <div class="label">Clipboard</div>
      </div>

      <div class="panel p-geo">
        <div class="body">
          <div class="named">
            <button v-for="t in geometryTools" :key="t.icon"><svg class="i20"><use :href="'#' + t.icon" /></svg>{{ t.label }}<svg class="caret"><use href="#caret" /></svg></button>
          </div>
          <div class="small two">
            <button v-for="i in geometrySmall" :key="i" :aria-label="i"><svg class="i20"><use :href="'#' + i" /></svg></button>
          </div>
          <div class="drops"><span></span><button aria-label="Paint options"><svg class="caret"><use href="#caret" /></svg></button></div>
        </div>
        <div class="label">Geometry</div>
      </div>

      <div class="panel p-mod">
        <div class="body">
          <div class="bigs four">
            <button v-for="i in modifyBig" :key="i" :aria-label="i"><svg class="i36"><use :href="'#' + i" /></svg></button>
          </div>
          <div class="small three">
            <button v-for="i in modifySmall" :key="i" :aria-label="i"><svg class="i20"><use :href="'#' + i" /></svg></button>
          </div>
        </div>
        <div class="label">Modify</div>
      </div>

      <div class="panel p-view">
        <div class="body viewgrid">
          <button aria-label="Hide"><svg class="i20"><use href="#bulb" /></svg></button>
          <button aria-label="Hide options"><svg class="caret"><use href="#caret" /></svg></button>
          <button aria-label="Displace"><svg class="i20"><use href="#hidebox" /></svg></button>
          <button aria-label="Override graphics"><svg class="i20"><use href="#brush" /></svg></button>
          <button aria-label="Override options"><svg class="caret"><use href="#caret" /></svg></button>
          <button aria-label="Linework"><svg class="i20"><use href="#linework" /></svg></button>
          <button aria-label="Selection box"><svg class="i20"><use href="#wire" /></svg></button>
        </div>
        <div class="label">View</div>
      </div>

      <div class="panel p-meas">
        <div class="body measgrid">
          <button aria-label="Measure distance"><svg class="i36"><use href="#dim" /></svg></button>
          <button aria-label="Measure options"><svg class="caret"><use href="#caret" /></svg></button>
          <button aria-label="Angular dimension"><svg class="i36"><use href="#angle" /></svg></button>
          <button aria-label="Dimension options"><svg class="caret"><use href="#caret" /></svg></button>
        </div>
        <div class="label">Measure</div>
      </div>

      <div class="panel p-create">
        <div class="body">
          <div class="bigs pair">
            <button v-for="i in createBig" :key="i" :aria-label="i"><svg class="i36"><use :href="'#' + i" /></svg></button>
          </div>
        </div>
        <div class="label">Create</div>
      </div>

      <div class="panel p-datum">
        <div class="body">
          <button class="big"><svg class="i36"><use href="#propagate" /></svg><span>Propagate<br />Extents</span></button>
        </div>
        <div class="label">Datum</div>
      </div>
    </section>

    <div class="options">Modify | Levels</div>

    <main class="work">
      <aside class="dock">
        <section class="properties">
          <h2 class="dock-title">Properties<button aria-label="Close properties"><svg class="i16"><use href="#close" /></svg></button></h2>
          <button class="type">
            <span class="preview"></span>
            <span class="type-name">Level<br />8mm Head</span>
            <svg class="caret wide-caret push"><use href="#caret" /></svg>
          </button>
          <div class="filter">
            <div class="select">
              <select v-model="filter" aria-label="Category filter"><option>Levels (1)</option></select>
              <svg class="i12"><use href="#chev-down" /></svg>
            </div>
            <button class="edit-type"><svg class="i20"><use href="#edittype" /></svg>Edit Type</button>
          </div>
          <div class="grid-wrap">
            <table class="grid">
              <colgroup><col class="c1" /><col class="c2" /><col class="c3" /></colgroup>
              <tbody>
                <tr class="head"><th colspan="3"><div>Constraints<svg class="dbl"><use href="#chev-double" /></svg></div></th></tr>
                <tr><td><label for="elev">Elevation</label></td><td class="field"><input id="elev" v-model="elevation" type="text" /></td><td></td></tr>
                <tr><td>Story Above</td><td>Default</td><td></td></tr>
                <tr class="head"><th colspan="3"><div>Dimensions<svg class="dbl"><use href="#chev-double" /></svg></div></th></tr>
                <tr><td>Computation Height</td><td>0.00</td><td class="assoc"><button aria-label="Associate parameter"></button></td></tr>
                <tr class="head"><th colspan="3"><div>Extents<svg class="dbl"><use href="#chev-double" /></svg></div></th></tr>
                <tr><td>Scope Box</td><td>None</td><td></td></tr>
              </tbody>
            </table>
            <div class="vbar">
              <svg class="i12"><use href="#chev-up" /></svg><span class="thumb t44"></span><svg class="i12 end"><use href="#chev-down" /></svg>
            </div>
          </div>
          <div class="foot"><a href="#help">Properties help</a><button class="apply" disabled>Apply</button></div>
        </section>

        <section class="browser">
          <h2 class="dock-title">Project Browser - офис сграда.rvt<button aria-label="Close browser"><svg class="i16"><use href="#close" /></svg></button></h2>
          <div class="tree-wrap">
            <ul class="tree">
              <li v-for="(n, i) in tree" :key="i" :class="{ root: n.root, bold: n.bold, last: n.last }">
                <span v-for="(g, j) in n.guides" :key="j" class="guide" :class="'g-' + g">
                  <button v-if="g === 'm' || g === 'p'" class="knob" :class="{ plus: g === 'p' }" :aria-label="'Toggle ' + n.name"></button>
                </span>
                <svg v-if="n.root" class="i18"><use href="#viewsall" /></svg>
                <span class="node">{{ n.name }}</span>
              </li>
            </ul>
            <div class="vbar">
              <svg class="i12"><use href="#chev-up" /></svg><span class="thumb t20"></span><svg class="i12 end"><use href="#chev-down" /></svg>
            </div>
          </div>
          <div class="hbar"><svg class="i12"><use href="#chev-left" /></svg><span class="thumb"></span><svg class="i12"><use href="#chev-right" /></svg></div>
        </section>
      </aside>

      <section class="viewer">
        <div class="viewtabs">
          <button v-for="t in viewTabs" :key="t.name" class="vtab" :class="{ active: t.active }">
            <svg class="i18"><use :href="'#' + t.icon" /></svg>{{ t.name }}<svg v-if="t.active" class="i16 push"><use href="#close" /></svg>
          </button>
          <button class="tablist" aria-label="Open tabs"><svg class="menu"><use href="#menu-down" /></svg></button>
        </div>
        <div class="stage">
          <div class="canvas">
            <svg class="drawing" role="img" aria-label="East elevation levels">
              <path class="align-line" d="M737 80V600" />
              <g v-for="l in levels" :key="l.name" class="level" :class="l.tone">
                <path class="datum" :d="`M3 ${l.y + 0.5}H738`" />
                <text x="715" :y="l.y - 11">{{ l.name }}</text>
                <text x="716" :y="l.y + 28">{{ l.value }}</text>
                <g :transform="`translate(760 ${l.y})`">
                  <circle class="disc" r="22.500" />
                  <path class="quad" d="M0 0V-22A22 22 0 0 0 -22 0ZM0 0V22A22 22 0 0 0 22 0Z" />
                  <path v-if="l.tone === 'selected' || l.tone === 'blue'" class="cross" d="M-22 0H22M0 -22V22" />
                  <g v-if="l.tone === 'hover'" class="halo"><circle class="rim" r="22.500" /><circle class="tint" r="21.500" /><path class="tint" d="M-21 0H21M0 -21V21" /><path class="dash" d="M-21 0H21M0 -21V21" /></g>
                </g>
              </g>
              <rect x="728" y="168" width="20" height="14" fill="#fff" />
              <text class="mode" x="737" y="179">3D</text>
              <path d="M738 237L808 307" stroke="#999" stroke-width="1.500" />
              <circle cx="737" cy="236.500" r="5.500" fill="none" stroke="#1d48a8" stroke-width="1.200" />
              <path d="M697 237l4-3 1 5 4-4" fill="none" stroke="#1d48a8" stroke-width="1.500" />
              <path d="M809 312v-4a4.500 4.500 0 0 1 9 0v4" fill="none" stroke="#1f4f8f" stroke-width="3" />
              <path d="M809 312v-4a4.500 4.500 0 0 1 9 0v4" fill="none" stroke="#c9e6f2" />
              <rect x="806.500" y="310.500" width="13" height="11" fill="#a5dcea" stroke="#1f4f8f" stroke-width="1.500" />
              <path d="M730.500 422v19l4.500-4 3.500 7.500 3-1.500-3.500-7h6z" fill="#fff" stroke="#333" stroke-width="1.200" />
            </svg>
            <input v-model="bubble" class="bubble" type="checkbox" aria-label="Show bubble" />
            <div class="navbar">
              <svg class="i12 corner"><use href="#nav-x" /></svg>
              <button aria-label="Steering wheel"><svg class="wheel" viewBox="0 0 30 32"><use href="#wheel" /><text class="wheel-mode" x="21" y="28">2D</text></svg></button>
              <svg class="caret faint"><use href="#caret" /></svg>
              <hr />
              <button aria-label="Zoom"><svg class="i22"><use href="#zoomall" /></svg></button>
              <svg class="caret faint"><use href="#caret" /></svg>
              <svg class="i12 corner end"><use href="#nav-min" /></svg>
            </div>
          </div>
          <div class="vbar stagebar">
            <svg class="i12"><use href="#chev-up" /></svg><span class="thumb t20"></span><svg class="i12"><use href="#chev-down" /></svg>
          </div>
        </div>
        <footer class="viewbar">
          <button class="scale">1 : 100</button>
          <button v-for="i in viewControls" :key="i" class="vc" :aria-label="i"><svg class="vci"><use :href="'#' + i" /></svg></button>
          <div class="hscroll"><svg class="i12"><use href="#chev-left" /></svg><span class="thumb"></span><svg class="i12"><use href="#chev-right" /></svg></div>
          <span class="grip"></span>
        </footer>
      </section>
    </main>
    <div class="statusbar"></div>
  </div>
</template>

<style>
html, body { margin: 0; background: #cccacc; }
</style>

<style scoped>
* { box-sizing: border-box; }
.app { height: 100vh; display: flex; flex-direction: column; overflow: hidden; font: 13px/16px 'Open Sans', 'Noto Sans', sans-serif; color: #3c3c3c; background: #cccacc; }
button { font: inherit; color: inherit; background: none; border: 0; padding: 0; margin: 0; display: flex; align-items: center; justify-content: center; }
svg { display: block; flex: none; overflow: visible; }
.defs { position: absolute; width: 0; height: 0; overflow: hidden; }
.i12 { width: 12px; height: 12px; }
.i16 { width: 16px; height: 16px; }
.i18 { width: 18px; height: 18px; }
.i20 { width: 20px; height: 20px; }
.i22 { width: 22px; height: 22px; }
.i36 { width: 36px; height: 36px; }
.caret { width: 8px; height: 5px; }
.wide-caret { width: 10px; height: 6px; }
.menu { width: 12px; height: 10px; }
.push { margin-left: auto; }

.titlebar { height: 32px; flex: none; display: flex; align-items: center; padding-bottom: 7px; }
.logo { width: 27px; font: 700 22px/25px 'Liberation Sans', Arial, sans-serif; color: #2b72b0; }
.tool { width: 29px; height: 25px; flex: none; display: flex; align-items: center; justify-content: center; }
.tool.wide { margin-right: 4px; }
.glyph { font: 700 21px/25px 'Liberation Sans', Arial, sans-serif; color: #444; }
.badge { font: 700 9px 'Open Sans', sans-serif; text-anchor: middle; fill: #333; }
.question { font: 700 14px 'Open Sans', sans-serif; text-anchor: middle; fill: #3565ad; }
.drop { width: 14px; height: 25px; flex: none; }
.sep { width: 8px; height: 22px; flex: none; display: flex; justify-content: center; }
.sep::before { content: ''; border-left: 1px solid #bdbbbd; }
.sep.roomy { width: 12px; }
.doc-title { flex: 1; margin: 0; text-align: center; font-size: 14px; font-weight: 400; line-height: 20px; white-space: nowrap; padding-bottom: 6px; }
.expand { width: 5px; height: 8px; margin-right: 7px; background: #333; clip-path: polygon(0 0, 100% 50%, 0 100%); }
.search { width: 215px; height: 25px; flex: none; border: 1px solid #222; border-top-width: 0; background: #fff; padding: 0 3px; font: italic 13px 'Open Sans', sans-serif; color: #333; }
.search::placeholder { color: #777; opacity: 1; }
.signin { width: 144px; height: 25px; font-size: 14px; padding-right: 7px; justify-content: flex-start; }
.winbuttons { display: flex; margin-left: 12px; margin-right: -2px; }

.tabs { height: 25px; flex: none; display: flex; font-size: 14px; }
.file { width: 51px; background: #2a7ab6; color: #fff; margin-right: 4px; }
.tabs button { padding-bottom: 2px; }
.tab { padding: 0 11px; white-space: nowrap; }
.tab.active { background: #e5efd9; color: #222; }
.collapse { gap: 5px; margin-left: 25px; }
.collapse-icon { width: 20px; height: 12px; }

.ribbon { height: 114px; flex: none; display: flex; background: #e5efd9; border-bottom: 2px solid #d2dacb; }
.panel { display: flex; flex-direction: column; height: 110px; background: #efeef1; border-right: 1px solid #eeeedd; }
.body { height: 89px; padding-top: 3px; display: flex; align-items: flex-start; }
.label { flex: 1; display: flex; align-items: center; justify-content: center; gap: 6px; }
.big { width: 54px; height: 86px; flex-direction: column; justify-content: flex-start; font-size: 14px; line-height: 17px; color: #3c3c3c; }
.on { background: linear-gradient(#aacdee, #c3dcf3); border: 1px solid #3a7dbb; }
.big .cursor { width: 16px; height: 26px; margin: 8px 0 11px; }
.p-select { width: 65px; }
.p-select .body { justify-content: center; }
.p-props { width: 78px; }
.stack { flex-direction: column; align-items: center; }
.half { width: 46px; height: 42px; margin-bottom: 1px; }
.props-icon { width: 28px; height: 36px; }
.p-clip { width: 94px; }
.p-clip .body { padding-left: 5px; }
.dim span { color: #a3a3a6; }
.paste-icon { width: 32px; height: 38px; margin: 3px 0 5px; }
.small { display: grid; grid-auto-rows: 28px; padding-top: 1px; }
.small button { width: 30px; }
.one { padding-left: 2px; }
.two { grid-template-columns: 30px 30px; }
.three { grid-template-columns: 30px 30px 30px; }
.p-geo { width: 165px; }
.p-geo .body { padding-left: 8px; }
.named { width: 80px; display: grid; grid-auto-rows: 28px; padding-top: 1px; font-size: 14px; }
.named button { justify-content: flex-start; gap: 5px; }
.named .caret { margin-left: 4px; }
.drops { display: grid; grid-auto-rows: 28px; padding: 1px 0 0 2px; }
.p-mod { width: 285px; }
.p-mod .body { padding-left: 3px; }
.bigs { display: grid; grid-auto-rows: 43px; }
.four { grid-template-columns: repeat(4, 47px); }
.pair { grid-template-columns: 45px 45px; }
.p-view { width: 76px; }
.viewgrid { display: grid; grid-template-columns: 32px 10px 30px; grid-auto-rows: 28px; padding: 4px 0 0 3px; }
.viewgrid button { height: 28px; }
.p-meas { width: 71px; }
.measgrid { display: grid; grid-template-columns: 44px 14px; grid-auto-rows: 43px; padding-left: 7px; }
.measgrid button { height: 43px; }
.p-create { width: 94px; }
.p-create .body { padding-left: 1px; }
.p-datum { width: 76px; margin-left: 5px; background: none; border: 0; }
.p-datum .body { background: #efeef1; }
.p-datum .big { width: 76px; }
.p-datum .big svg { margin: 4px 0 7px; }
.options { height: 31px; flex: none; background: #e5efd9; color: #a5a8a0; padding: 8px; border-bottom: 1px solid #dfe6d6; }

.work { flex: 1; display: flex; min-height: 0; padding-top: 2px; }
.dock { width: 371px; flex: none; display: flex; flex-direction: column; border-right: 2px solid #cccacc; background: #cccacc; color: #222; }
.properties, .browser { background: #f0eff2; display: flex; flex-direction: column; padding-right: 3px; }
.properties { height: 320px; margin-bottom: 3px; flex: none; }
.browser { flex: 1; min-height: 0; }
.dock-title { margin: 0; height: 24px; flex: none; padding: 1px 2px 0; display: flex; align-items: center; justify-content: space-between; font-size: 13px; font-weight: 400; color: #444; }
.type { height: 85px; border: 1px solid #d4d3d6; padding: 2px 1px 2px 2px; justify-content: flex-start; color: #444; flex: none; }
.preview { width: 78px; height: 78px; border: 1px solid #d0d0d3; }
.type-name { margin-left: 5px; line-height: 19px; text-align: left; }
.filter { height: 30px; flex: none; display: flex; align-items: center; font-size: 14px; }
.select { position: relative; width: 267px; height: 26px; }
.select select { appearance: none; width: 100%; height: 100%; padding: 0 3px; font: inherit; color: #222; border: 1px solid #acacae; border-radius: 0; background: linear-gradient(#f0f0f0, #e2e2e3); }
.select svg { position: absolute; right: 4px; top: 7px; pointer-events: none; }
.edit-type { gap: 5px; margin-left: 8px; padding-bottom: 3px; }
.grid-wrap { display: flex; flex: none; }
.grid { width: 346px; border-collapse: collapse; table-layout: fixed; background: #fff; font-size: 14px; }
.c1 { width: 165px; }
.c2 { width: 166px; }
.c3 { width: 15px; }
.grid th, .grid td { padding: 0; text-align: left; font-weight: 400; }
.grid th { height: 22px; background: #dcdadc; padding: 0 7px 0 2px; }
.grid th div { display: flex; align-items: center; justify-content: space-between; }
.grid td { height: 21px; padding-left: 2px; border-right: 1px dotted #999; border-bottom: 1px dotted #999; }
.grid td:first-child { padding-left: 9px; }
.grid td.field, .grid td.assoc { padding: 0; }
.field input { display: block; width: 100%; height: 20px; border: 2px solid #222; padding: 0 1px; font-family: inherit; font-size: 13px; line-height: 16px; color: #444; background: #fff; border-radius: 0; }
.assoc button { width: 12px; height: 19px; border: 1px solid #aaa; border-right-width: 2px; background: #eee; }
.dbl { width: 10px; height: 12px; }
.vbar { width: 18px; margin-left: 1px; flex: none; display: flex; flex-direction: column; align-items: center; background: #f0eff2; padding: 4px 0; }
.vbar .thumb { width: 100%; background: #cccacc; margin-top: 4px; }
.t44 { height: 44px; }
.t20 { height: 20px; }
.vbar .end { margin-top: auto; }
.foot { flex: 1; display: flex; justify-content: space-between; align-items: flex-start; padding: 2px 2px 0 2px; }
.foot a { color: #1f66c1; line-height: 22px; }
.apply { width: 87px; height: 25px; border: 1px solid #d8d7da; color: #999; font-size: 14px; }
.tree-wrap { flex: 1; display: flex; min-height: 0; }
.tree { flex: 1; margin: 0; padding: 0; list-style: none; background: #fff; display: grid; grid-auto-rows: 1fr; overflow: hidden; }
.tree li { display: flex; align-items: center; padding-left: 9px; white-space: nowrap; min-height: 0; font-size: 14px; }
.guide { position: relative; width: 24px; align-self: stretch; flex: none; }
.g-l::before, .g-t::before, .g-m::before, .g-p::before, .g-e::before { content: ''; position: absolute; left: 0; top: 0; bottom: 0; border-left: 1px dotted #999; }
.g-e::before, .last .g-m::before { bottom: 50%; }
.root .guide::before { top: 50%; }
.g-t::after, .g-e::after, .g-m::after, .g-p::after { content: ''; position: absolute; left: 0; right: 7px; top: 55%; border-top: 1px dotted #999; }
.knob { position: absolute; z-index: 1; left: -5px; top: 6px; width: 11px; height: 11px; border: 1px solid #888; background: linear-gradient(#fff, #ddd); }
.knob::before { content: ''; position: absolute; left: 2px; right: 2px; top: 4px; border-top: 1px solid #3b4c8f; }
.knob.plus::after { content: ''; position: absolute; top: 2px; bottom: 2px; left: 4px; border-left: 1px solid #3b4c8f; }
.node { margin-left: -3px; }
.root .guide { width: 15px; }
.root .node { margin-left: 3px; padding: 2px 4px; background: #e4e3e5; }
.bold .node { font-weight: 700; }
.hbar { height: 20px; flex: none; display: flex; align-items: center; padding: 0 2px 2px 3px; }
.hbar .thumb { width: 291px; height: 100%; margin: 0 22px 0 5px; background: #cccacc; }

.viewer { flex: 1; min-width: 0; display: flex; flex-direction: column; }
.viewtabs { height: 24px; flex: none; display: flex; }
.vtab { width: 153px; padding: 1px 4px 0 7px; justify-content: flex-start; gap: 8px; color: #555; }
.vtab svg { color: #707074; }
.vtab.active { background: #fff; font-weight: 700; color: #333; }
.vtab.active svg { color: #3a3a3e; }
.tablist { margin-left: auto; width: 13px; }
.stage { flex: 1; display: flex; min-height: 0; background: #fff; }
.canvas { flex: 1; position: relative; overflow: hidden; background: #fff; }
.drawing { position: absolute; inset: 0; width: 100%; height: 100%; overflow: hidden; }
.level { fill: #111; stroke: none; }
.level text { font: 24px 'Liberation Sans', Arial, sans-serif; text-anchor: end; }
.datum { fill: none; stroke: #222; stroke-width: 1px; stroke-dasharray: 112 28 56 28; stroke-dashoffset: 43; }
.disc { fill: #fff; stroke: #222; stroke-width: 1px; }
.quad { fill: #000; }
.cross { fill: none; stroke: #1746b0; stroke-width: 1px; }
.blue .quad, .hover .quad { fill: #0836c0; }
.blue .disc { stroke: #1746b0; }
.selected { fill: #1c4bc0; }
.selected .quad { fill: #0836c0; }
.selected .disc, .selected .datum { stroke: #1c4bb4; }
.halo { fill: none; }
.tint { stroke: #c8385f; stroke-width: 3px; }
.halo .dash { stroke: #ff8087; stroke-width: 3px; stroke-dasharray: 7 4; }
.rim { stroke: #e0505f; stroke-width: 2px; }
.align-line { fill: none; stroke: #8ccbe8; stroke-width: 2px; stroke-dasharray: 7 8; }
.mode { font: 700 10px 'DejaVu Sans', sans-serif; fill: #163f9c; text-anchor: middle; }
.bubble { appearance: none; position: absolute; left: 846px; top: 229px; width: 14px; height: 14px; margin: 0; border: 2px solid #2a559c; background: #fff; }
.bubble:checked::after { content: ''; position: absolute; left: 3px; top: 0; width: 4px; height: 7px; border: solid #163f7c; border-width: 0 2px 2px 0; transform: rotate(40deg); }
.navbar { position: absolute; right: 2px; top: 3px; width: 42px; height: 139px; border: 2px solid #bdbdc0; border-radius: 6px; background: #f3f3f6; display: flex; flex-direction: column; align-items: center; }
.navbar hr { width: 30px; border: 0; border-top: 1px solid #bbb; margin: 4px 0 8px; }
.navbar .wheel { width: 30px; height: 32px; margin: 8px 0 5px; }
.wheel-mode { font: 700 12px 'Open Sans', sans-serif; text-anchor: middle; fill: #6a9cc9; }
.navbar .i22 { margin-bottom: 11px; }
.corner { align-self: flex-end; margin-right: 2px; }
.corner.end { margin-top: 10px; }
.faint { opacity: .6; }
.stagebar { width: 16px; margin: 0; padding: 7px 0 3px; justify-content: space-between; }
.viewbar { height: 23px; flex: none; display: flex; align-items: center; background: #f0eff2; border-left: 3px solid #fff; border-bottom: 2px solid #fff; }
.scale { width: 91px; padding-left: 5px; color: #222; }
.vc { width: 25px; height: 20px; }
.vci { width: 20px; height: 16px; }
.hscroll { flex: 1; display: flex; align-items: center; justify-content: space-between; padding: 0 5px; height: 100%; }
.hscroll .thumb { width: 20px; height: 18px; background: #cccacc; }
.grip { width: 16px; height: 14px; background: radial-gradient(circle, #999 1px, transparent 1px) 0 0 / 4px 4px; clip-path: polygon(100% 20%, 100% 100%, 20% 100%); }
.statusbar { height: 5px; flex: none; background: #cccacc; }
</style>
